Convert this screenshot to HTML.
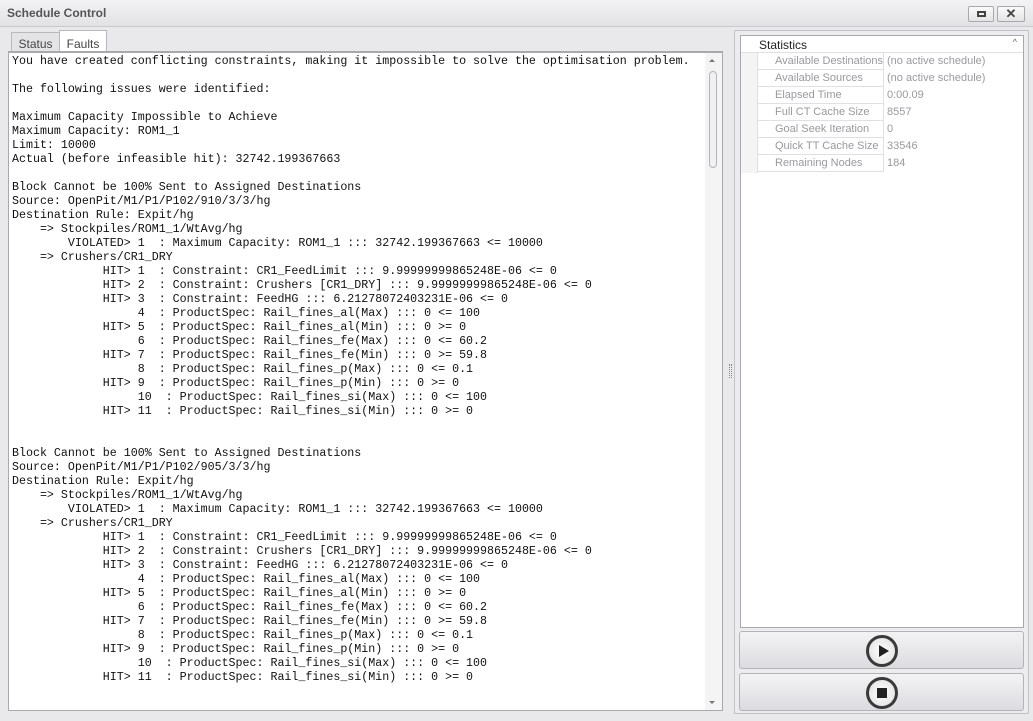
<!DOCTYPE html>
<html><head><style>
*{margin:0;padding:0;box-sizing:border-box}
body{width:1033px;height:721px;background:#e9e9eb;position:relative;overflow:hidden;font-family:"Liberation Sans",sans-serif}
.title{position:absolute;left:0;top:0;width:1033px;height:27px;background:linear-gradient(#f3f3f4,#e2e2e5);border-bottom:1px solid #c9c9cd}
.title span{position:absolute;left:7px;top:6px;font-size:12px;font-weight:bold;color:#555}
.wb{position:absolute;top:6px;width:26px;height:16px;border:1px solid #a9a9ad;border-radius:2px;background:linear-gradient(#fafafa,#e4e4e6)}
.tab{position:absolute;top:30px;height:22px;font-size:12px;color:#444;padding:6px 0 0 0;text-align:center;border:1px solid #b9b9bd;border-bottom:none}
.box{position:absolute;left:8px;top:51px;width:715px;height:660px;background:#fff;border:1px solid #a9a9ad;border-top:2px solid #a9a9ad}
pre{position:absolute;left:3px;top:2px;font-family:"Liberation Mono",monospace;font-size:11.65px;line-height:14px;color:#111}
.sb{position:absolute;right:0;top:0;width:17px;height:100%;background:#f4f4f5}
.right{position:absolute;left:734px;top:30px;width:295px;height:684px;border:1px solid #c2c2c6;background:#ececee}
.grid{position:absolute;left:5px;top:4px;width:284px;height:593px;background:#fff;border:1px solid #a9a9ad}
.row{position:absolute;left:17px;width:265px;height:17px;border-bottom:1px solid #e0e0e2;font-size:11px;color:#9a9a9e}
.row .l{position:absolute;left:17px;top:2px;white-space:nowrap}
.row .v{position:absolute;left:125px;border-left:1px solid #e0e0e2;height:17px;top:0;padding:2px 0 0 3px;width:140px;background:#fff}
.btn{position:absolute;left:4px;width:285px;height:38px;border:1px solid #b4b4b8;border-radius:3px;background:linear-gradient(#f3f3f4,#dcdce0)}
.ic{position:absolute;left:126px;top:3px;width:32px;height:32px;border-radius:50%;border:3px solid #3a3a3a;background:radial-gradient(#fff,#ddd)}
</style></head><body>
<div class="title"><span>Schedule Control</span>
<div class="wb" style="left:968px"><div style="position:absolute;left:8px;top:4px;width:9px;height:6px;border:2px solid #444"></div></div>
<div class="wb" style="left:997px;width:28px;text-align:center;font-size:13px;font-weight:bold;color:#444;line-height:13px">✕</div></div>
<div class="tab" style="left:11px;width:49px;background:#e4e4e6;top:32px;height:20px;padding-top:4px">Status</div>
<div class="tab" style="left:59px;width:48px;background:#fff">Faults</div>
<div class="box"><pre>You have created conflicting constraints, making it impossible to solve the optimisation problem.

The following issues were identified:

Maximum Capacity Impossible to Achieve
Maximum Capacity: ROM1_1
Limit: 10000
Actual (before infeasible hit): 32742.199367663

Block Cannot be 100% Sent to Assigned Destinations
Source: OpenPit/M1/P1/P102/910/3/3/hg
Destination Rule: Expit/hg
    => Stockpiles/ROM1_1/WtAvg/hg
        VIOLATED> 1  : Maximum Capacity: ROM1_1 ::: 32742.199367663 &lt;= 10000
    => Crushers/CR1_DRY
             HIT> 1  : Constraint: CR1_FeedLimit ::: 9.99999999865248E-06 &lt;= 0
             HIT> 2  : Constraint: Crushers [CR1_DRY] ::: 9.99999999865248E-06 &lt;= 0
             HIT> 3  : Constraint: FeedHG ::: 6.21278072403231E-06 &lt;= 0
                  4  : ProductSpec: Rail_fines_al(Max) ::: 0 &lt;= 100
             HIT> 5  : ProductSpec: Rail_fines_al(Min) ::: 0 &gt;= 0
                  6  : ProductSpec: Rail_fines_fe(Max) ::: 0 &lt;= 60.2
             HIT> 7  : ProductSpec: Rail_fines_fe(Min) ::: 0 &gt;= 59.8
                  8  : ProductSpec: Rail_fines_p(Max) ::: 0 &lt;= 0.1
             HIT> 9  : ProductSpec: Rail_fines_p(Min) ::: 0 &gt;= 0
                  10  : ProductSpec: Rail_fines_si(Max) ::: 0 &lt;= 100
             HIT> 11  : ProductSpec: Rail_fines_si(Min) ::: 0 &gt;= 0


Block Cannot be 100% Sent to Assigned Destinations
Source: OpenPit/M1/P1/P102/905/3/3/hg
Destination Rule: Expit/hg
    => Stockpiles/ROM1_1/WtAvg/hg
        VIOLATED> 1  : Maximum Capacity: ROM1_1 ::: 32742.199367663 &lt;= 10000
    => Crushers/CR1_DRY
             HIT> 1  : Constraint: CR1_FeedLimit ::: 9.99999999865248E-06 &lt;= 0
             HIT> 2  : Constraint: Crushers [CR1_DRY] ::: 9.99999999865248E-06 &lt;= 0
             HIT> 3  : Constraint: FeedHG ::: 6.21278072403231E-06 &lt;= 0
                  4  : ProductSpec: Rail_fines_al(Max) ::: 0 &lt;= 100
             HIT> 5  : ProductSpec: Rail_fines_al(Min) ::: 0 &gt;= 0
                  6  : ProductSpec: Rail_fines_fe(Max) ::: 0 &lt;= 60.2
             HIT> 7  : ProductSpec: Rail_fines_fe(Min) ::: 0 &gt;= 59.8
                  8  : ProductSpec: Rail_fines_p(Max) ::: 0 &lt;= 0.1
             HIT> 9  : ProductSpec: Rail_fines_p(Min) ::: 0 &gt;= 0
                  10  : ProductSpec: Rail_fines_si(Max) ::: 0 &lt;= 100
             HIT> 11  : ProductSpec: Rail_fines_si(Min) ::: 0 &gt;= 0</pre>
<div class="sb"><div style="position:absolute;left:4px;top:6px;border:3px solid transparent;border-bottom:3px solid #777;border-top:none"></div>
<div style="position:absolute;left:4px;top:18px;width:8px;height:97px;border:1px solid #b4b4b8;border-radius:4px;background:#f0f0f2"></div>
<div style="position:absolute;left:4px;bottom:6px;border:3px solid transparent;border-top:3px solid #777;border-bottom:none"></div></div>
</div>
<div style="position:absolute;left:729px;top:364px;width:3px;height:14px;border-left:1px dotted #888;border-right:1px dotted #888"></div>
<div class="right">
<div class="grid">
<div style="position:absolute;left:0;top:0;width:282px;height:17px;border-bottom:1px solid #e0e0e2;font-size:12px;color:#222;padding:2px 0 0 18px">Statistics<span style="position:absolute;right:6px;top:1px;font-size:9px;color:#666">^</span></div>
<div style="position:absolute;left:0;top:17px;width:17px;height:120px;background:#f4f4f5;border-right:1px solid #e0e0e2"></div>
<div class="row" style="top:17px"><span class="l">Available Destinations</span><span class="v">(no active schedule)</span></div>
<div class="row" style="top:34px"><span class="l">Available Sources</span><span class="v">(no active schedule)</span></div>
<div class="row" style="top:51px"><span class="l">Elapsed Time</span><span class="v">0:00.09</span></div>
<div class="row" style="top:68px"><span class="l">Full CT Cache Size</span><span class="v">8557</span></div>
<div class="row" style="top:85px"><span class="l">Goal Seek Iteration</span><span class="v">0</span></div>
<div class="row" style="top:102px"><span class="l">Quick TT Cache Size</span><span class="v">33546</span></div>
<div class="row" style="top:119px"><span class="l">Remaining Nodes</span><span class="v">184</span></div>
</div>
<div class="btn" style="top:600px"><div class="ic"><div style="position:absolute;left:10px;top:7px;border-left:10px solid #222;border-top:6px solid transparent;border-bottom:6px solid transparent"></div></div></div>
<div class="btn" style="top:642px"><div class="ic"><div style="position:absolute;left:8px;top:8px;width:10px;height:10px;background:#222"></div></div></div>
</div>
</body></html>
